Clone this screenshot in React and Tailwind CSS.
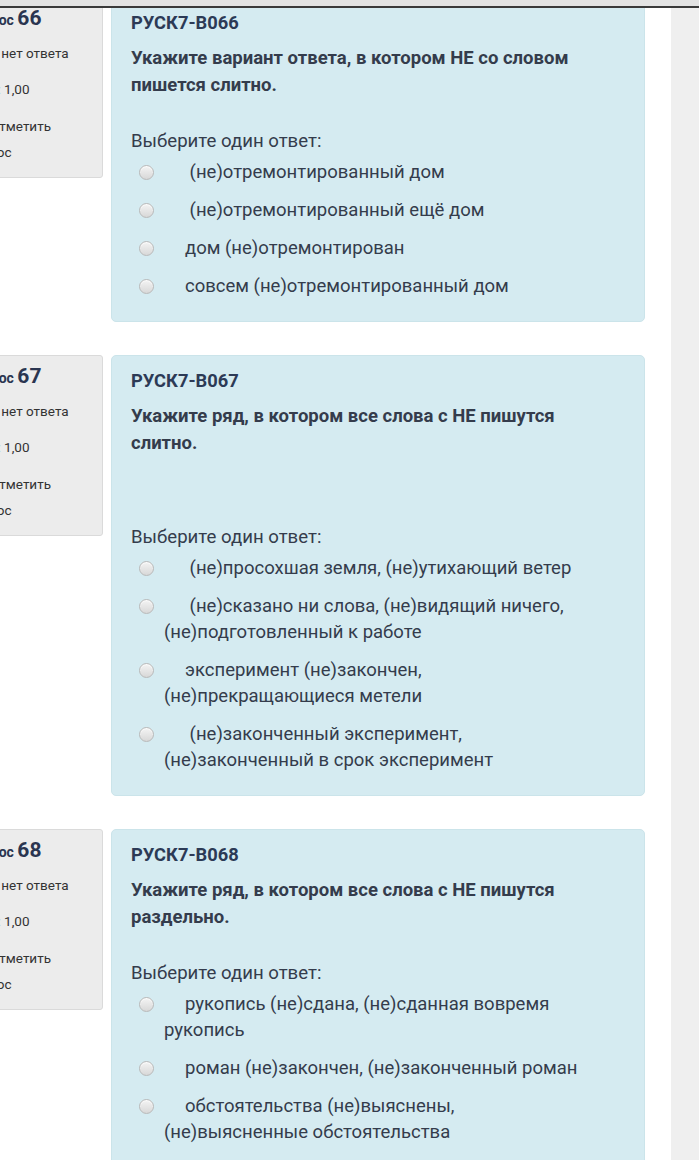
import React from 'react'

const questions = [
  {
    num: 66,
    code: 'РУСК7-В066',
    text: ['Укажите вариант ответа, в котором НЕ со словом', 'пишется слитно.'],
    extra: false,
    options: [
      { pad: true, lines: ['(не)отремонтированный дом'] },
      { pad: true, lines: ['(не)отремонтированный ещё дом'] },
      { pad: false, lines: ['дом (не)отремонтирован'] },
      { pad: false, lines: ['совсем (не)отремонтированный дом'] },
    ],
  },
  {
    num: 67,
    code: 'РУСК7-В067',
    text: ['Укажите ряд, в котором все слова с НЕ пишутся', 'слитно.'],
    extra: true,
    options: [
      { pad: true, lines: ['(не)просохшая земля, (не)утихающий ветер'] },
      { pad: true, lines: ['(не)сказано ни слова, (не)видящий ничего,', '(не)подготовленный к работе'] },
      { pad: false, lines: ['эксперимент (не)закончен,', '(не)прекращающиеся метели'] },
      { pad: true, lines: ['(не)законченный эксперимент,', '(не)законченный в срок эксперимент'] },
    ],
  },
  {
    num: 68,
    code: 'РУСК7-В068',
    text: ['Укажите ряд, в котором все слова с НЕ пишутся', 'раздельно.'],
    extra: false,
    options: [
      { pad: false, lines: ['рукопись (не)сдана, (не)сданная вовремя', 'рукопись'] },
      { pad: false, lines: ['роман (не)закончен, (не)законченный роман'] },
      { pad: false, lines: ['обстоятельства (не)выяснены,', '(не)выясненные обстоятельства'] },
    ],
  },
]

function Radio() {
  return (
    <span className="inline-block align-[-2px] w-[15px] h-[15px] -ml-[25px] mr-[31px] rounded-full border border-[#b9b9b9] bg-gradient-to-b from-[#f4f4f4] to-[#d8d8d8] shadow-[inset_0_1px_1px_rgba(255,255,255,0.8)]" />
  )
}

function Info({ num }) {
  return (
    <div className="w-[148px] -ml-[45px] shrink-0 self-start bg-[#ececec] border border-[#dadada] rounded-[3px] pl-[10px] pr-2 pt-[6px] pb-[12px] text-[#333]">
      <div className="text-[14px] font-bold leading-[28px] text-[#2a3550]">
        Вопрос <span className="text-[21px]">{num}</span>
      </div>
      <div className="text-[13.5px] leading-[22px] mt-[8px]">Пока нет ответа</div>
      <div className="text-[13.5px] leading-[22px] mt-[14px]">Балл: 1,00</div>
      <div className="text-[13.5px] leading-[26px] mt-[13px] indent-[24px] w-[110px]">Отметить вопрос</div>
    </div>
  )
}

function Question({ q }) {
  return (
    <div className="flex gap-2 mb-[33px]">
      <Info num={q.num} />
      <div className="flex-1 bg-[#d5ebf1] border border-[#cbe4ea] rounded-[5px] pl-[19px] pr-4 pt-[12px] pb-[22px] text-[#343c4c]">
        <div className="text-[18.3px] font-bold leading-[26px] text-[#2c3a56]">{q.code}</div>
        <div className="mt-[9px] text-[18.5px] font-bold leading-[27px] text-[#343c4c]">
          {q.text.map((t) => (
            <div key={t} className="whitespace-nowrap">{t}</div>
          ))}
        </div>
        {q.extra && <div className="h-[38px]" />}
        <div className="mt-[28px] text-[18.6px] leading-[28px]">Выберите один ответ:</div>
        <div className="mt-[4px] pl-[33px]">
          {q.options.map((o, i) => (
            <div key={i} className="text-[18.5px] leading-[26px] mb-[12px] last:mb-0 whitespace-nowrap">
              <Radio />
              {o.pad && <span>{'\u00a0'}</span>}
              {o.lines.map((l, j) => (
                <React.Fragment key={j}>
                  {j > 0 && <br />}
                  {l}
                </React.Fragment>
              ))}
            </div>
          ))}
        </div>
      </div>
    </div>
  )
}

export default function App() {
  return (
    <div className="min-h-[1160px] bg-[#efefef] overflow-hidden" style={{ fontFamily: 'Roboto, "Noto Sans", sans-serif' }}>
      <div className="fixed top-0 left-0 right-0 h-[8px] bg-[#e3e3e3] border-b-2 border-[#3a3a3a] z-10" />
      <div className="w-[671px] bg-white min-h-[1160px] pr-[26px] -mt-[3px]">
        {questions.map((q) => (
          <Question key={q.num} q={q} />
        ))}
      </div>
    </div>
  )
}
